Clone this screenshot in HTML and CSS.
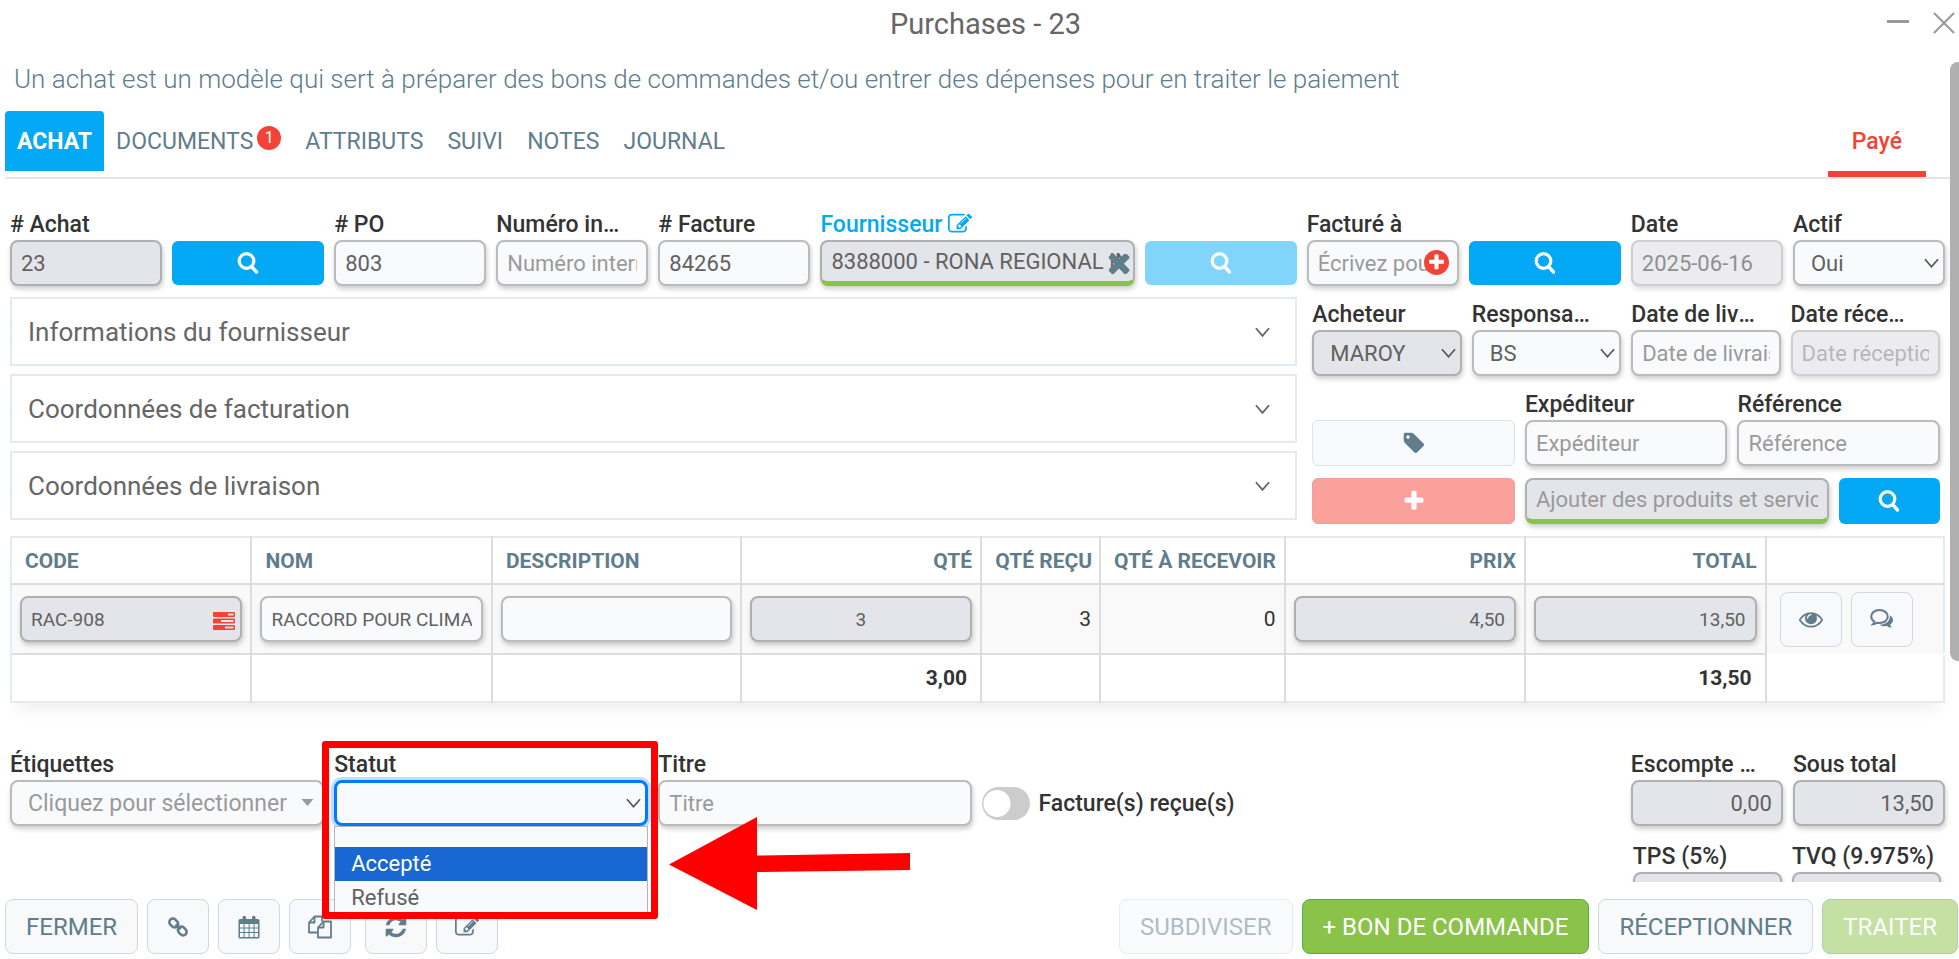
FILE: index.html
```html
<!DOCTYPE html>
<html lang="fr">
<head>
<meta charset="UTF-8" />
<meta name="viewport" content="width=device-width, initial-scale=1" />
<title>Purchases - 23</title>
<link rel="stylesheet" href="styles.css">
</head>
<body>

<svg class="sprite" aria-hidden="true">
  <symbol id="i-search" viewBox="0 0 24 24"><ellipse cx="10.5" cy="10" rx="7.3" ry="7.3" fill="none" stroke="currentColor" stroke-width="3.2"/><path d="M15.5 15.5l5 5.500" fill="none" stroke="currentColor" stroke-width="3.400" stroke-linecap="round"/></symbol>
  <symbol id="i-edit" viewBox="0 0 1792 1792"><path d="M888 1184l116-116-152-152-116 116v56h96v96h56zm440-720q-16-16-33 1l-350 350q-17 17-1 33t33-1l350-350q17-17 1-33zm80 594v190q0 119-84.5 203.5t-203.5 84.5h-832q-119 0-203.5-84.5t-84.5-203.5v-832q0-119 84.5-203.500t203.500-84.500h832q63 0 117 25 15 7 18 23 3 17-9 29l-49 49q-14 14-32 8-23-6-45-6h-832q-66 0-113 47t-47 113v832q0 66 47 113t113 47h832q66 0 113-47t47-113v-126q0-13 9-22l64-64q15-15 35-7t20 29zm-96-738l288 288-672 672h-288v-288zm444 132l-92 92-288-288 92-92q28-28 68-28t68 28l152 152q28 28 28 68t-28 68z"/></symbol>
  <symbol id="i-times" viewBox="260 400 1260 1260"><path d="M1490 1322q0 40-28 68l-136 136q-28 28-68 28t-68-28l-294-294-294 294q-28 28-68 28t-68-28l-136-136q-28-28-28-68t28-68l294-294-294-294q-28-28-28-68t28-68l136-136q28-28 68-28t68 28l294 294 294-294q28-28 68-28t68 28l136 136q28 28 28 68t-28 68l-294 294 294 294q28 28 28 68z"/></symbol>
  <symbol id="i-plus" viewBox="0 0 1792 1792"><path d="M1600 736v192q0 40-28 68t-68 28h-416v416q0 40-28 68t-68 28h-192q-40 0-68-28t-28-68v-416h-416q-40 0-68-28t-28-68v-192q0-40 28-68t68-28h416v-416q0-40 28-68t68-28h192q40 0 68 28t28 68v416h416q40 0 68 28t28 68z"/></symbol>
  <symbol id="i-tag" viewBox="0 0 1792 1792"><path d="M576 448q0-53-37.500-90.500t-90.500-37.500-90.500 37.500-37.500 90.500 37.500 90.500 90.500 37.500 90.500-37.500 37.500-90.500zm1067 576q0 53-37 90l-491 492q-39 37-91 37-53 0-90-37l-715-716q-38-37-64.500-101t-26.500-117v-416q0-52 38-90t90-38h416q53 0 117 26.500t102 64.500l715 714q37 39 37 91z"/></symbol>
  <symbol id="i-eye" viewBox="0 0 1792 1792"><path d="M1664 960q-152-236-381-353 61 104 61 225 0 185-131.500 316.500t-316.500 131.500-316.500-131.500-131.500-316.500q0-121 61-225-229 117-381 353 133 205 333.500 326.500t434.500 121.500 434.500-121.500 333.500-326.500zm-720-384q0-20-14-34t-34-14q-125 0-214.500 89.500t-89.500 214.500q0 20 14 34t34 14 34-14 14-34q0-86 61-147t147-61q20 0 34-14t14-34zm848 384q0 34-20 69-140 230-376.500 368.500t-499.500 138.500-499.500-139-376.500-368q-20-35-20-69t20-69q140-229 376.500-368t499.500-139 499.500 139 376.500 368q20 35 20 69z"/></symbol>
  <symbol id="i-comments" viewBox="0 0 24 24"><path d="M9.500 3c4.700 0 8.300 2.900 8.300 6.500S14.200 16 9.500 16c-.9 0-1.700-.1-2.500-.3-1.300.9-2.700 1.500-4 1.600.8-.8 1.200-1.700 1.300-2.800C2.300 13.300 1.200 11.500 1.200 9.500 1.200 5.900 4.800 3 9.500 3z" fill="none" stroke="currentColor" stroke-width="2"/><path d="M20 8.500c1.900 1.100 3 2.800 3 4.600 0 1.800-1 3.400-2.700 4.500.1 1.300.8 2.300 1.700 3.200-2 0-3.600-.6-5-1.700-2.700.4-5.300-.1-7.300-1.400 5.700.1 10.500-3.500 10.300-9.200z"/></symbol>
  <symbol id="i-tasks" viewBox="0 0 22 18"><path fill-rule="evenodd" d="M1 0h20a1 1 0 0 1 1 1v3a1 1 0 0 1-1 1H1a1 1 0 0 1-1-1V1a1 1 0 0 1 1-1zM15 1.500v2h5.500v-2zM1 6.500h20a1 1 0 0 1 1 1v3a1 1 0 0 1-1 1H1a1 1 0 0 1-1-1v-3a1 1 0 0 1 1-1zM8 8v2h12.500V8zM1 13h20a1 1 0 0 1 1 1v3a1 1 0 0 1-1 1H1a1 1 0 0 1-1-1v-3a1 1 0 0 1 1-1zM12 14.500v2h8.500v-2z"/></symbol>
  <symbol id="i-link" viewBox="0 0 24 24"><g fill="none" stroke="currentColor" stroke-width="2.600"><rect x="3" y="4.500" width="9.500" height="7" rx="3.500" transform="rotate(45 7.700 8)"/><rect x="11.500" y="12.500" width="9.500" height="7" rx="3.500" transform="rotate(45 16.300 16)"/><path d="M9.500 9.500l5 5"/></g></symbol>
  <symbol id="i-calendar" viewBox="0 0 24 24"><path fill-rule="evenodd" d="M3 4h2.500V2.500a1.500 1.500 0 0 1 3.500 0V4h6V2.500a1.500 1.500 0 0 1 3.500 0V4H21a1.500 1.500 0 0 1 1.500 1.500V22a1.500 1.500 0 0 1-1.500 1.500H3A1.500 1.500 0 0 1 1.500 22V5.500A1.500 1.500 0 0 1 3 4zM3 9v3.500h3.600V9zM7.600 9v3.500h4V9zM12.600 9v3.500h4V9zM17.600 9v3.500H21V9zM3 13.500V17h3.600v-3.500zM7.600 13.500V17h4v-3.500zM12.600 13.500V17h4v-3.500zM17.600 13.500V17H21v-3.500zM3 18v4h3.600v-4zM7.600 18v4h4v-4zM12.600 18v4h4v-4zM17.600 18v4H21v-4z"/></symbol>
  <symbol id="i-copy" viewBox="0 0 24 24"><g fill="none" stroke="currentColor" stroke-width="1.800" stroke-linejoin="round"><path d="M9.500 17.500H1V7.500L6.500 1.500H14v5"/><path d="M6.500 1.500v6H1"/><path d="M10 12.500l5.500-6H23v16H10z"/><path d="M15.500 6.500v6H10"/></g></symbol>
  <symbol id="i-refresh" viewBox="0 0 1792 1792"><path d="M1639 1056q0 5-1 7-64 268-268 434.500t-478 166.500q-146 0-282.500-55t-243.500-157l-129 129q-19 19-45 19t-45-19-19-45v-448q0-26 19-45t45-19h448q26 0 45 19t19 45-19 45l-137 137q71 66 161 102t187 36q134 0 250-65t186-179q11-17 53-117 8-23 30-23h192q13 0 22.500 9.500t9.500 22.500zm25-800v448q0 26-19 45t-45 19h-448q-26 0-45-19t-19-45 19-45l138-138q-148-137-349-137-134 0-250 65t-186 179q-11 17-53 117-8 23-30 23h-199q-13 0-22.500-9.500t-9.500-22.500v-7q65-268 270-434.500t480-166.500q146 0 284 55.500t245 156.500l130-129q19-19 45-19t45 19 19 45z"/></symbol>
  <symbol id="i-chevron" viewBox="0 0 16 12"><path d="M1 2l7 8 7-8" fill="none" stroke="currentColor" stroke-width="2"/></symbol>
</svg>

<header class="titlebar">
  <h1>Purchases - 23</h1>
  <div class="window-buttons">
    <button type="button" aria-label="Réduire"><svg viewBox="0 0 22 22"><path d="M0 9.500h22" stroke="currentColor" stroke-width="3"/></svg></button>
    <button type="button" aria-label="Fermer la fenêtre"><svg viewBox="0 0 22 22"><path d="M1 1l20 20M21 1L1 21" stroke="currentColor" stroke-width="2"/></svg></button>
  </div>
</header>

<main>
  <p class="intro">Un achat est un modèle qui sert à préparer des bons de commandes et/ou entrer des dépenses pour en traiter le paiement</p>

  <nav class="tabs">
    <a href="#achat" class="tab active">ACHAT</a>
    <a href="#documents" class="tab">DOCUMENTS<span class="badge">1</span></a>
    <a href="#attributs" class="tab">ATTRIBUTS</a>
    <a href="#suivi" class="tab">SUIVI</a>
    <a href="#notes" class="tab">NOTES</a>
    <a href="#journal" class="tab">JOURNAL</a>
    <span class="paid">Payé</span>
  </nav>

  <form id="achat" class="content">
    <div class="grid">
      <div class="field"><label for="achatNo"># Achat</label><input id="achatNo" class="control grey" value="23" readonly></div>
      <button type="button" class="btn-search" aria-label="Chercher un achat"><svg class="icon"><use href="#i-search"/></svg></button>
      <div class="field"><label for="po"># PO</label><input id="po" class="control" value="803"></div>
      <div class="field"><label for="interne">Numéro interne</label><input id="interne" class="control" placeholder="Numéro interne"></div>
      <div class="field"><label for="facture"># Facture</label><input id="facture" class="control" value="84265"></div>
      <div class="field span2">
        <label for="fournisseur"><a href="#fournisseur">Fournisseur <svg class="icon small"><use href="#i-edit"/></svg></a></label>
        <div class="with-icon">
          <input id="fournisseur" class="control grey green" value="8388000 - RONA REGIONAL INC" readonly>
          <button type="button" class="clear" aria-label="Effacer"><svg><use href="#i-times"/></svg></button>
        </div>
      </div>
      <button type="button" class="btn-search faded" aria-label="Chercher un fournisseur" disabled><svg class="icon"><use href="#i-search"/></svg></button>
      <div class="field">
        <label for="factureA">Facturé à</label>
        <div class="with-icon">
          <input id="factureA" class="control" placeholder="Écrivez pour">
          <button type="button" class="add" aria-label="Ajouter"><svg><use href="#i-plus"/></svg></button>
        </div>
      </div>
      <button type="button" class="btn-search" aria-label="Chercher un client"><svg class="icon"><use href="#i-search"/></svg></button>
      <div class="field"><label for="date">Date</label><input id="date" class="control" value="2025-06-16" disabled></div>
      <div class="field"><label for="actif">Actif</label><select id="actif" class="control"><option>Oui</option><option>Non</option></select></div>
    </div>

    <div class="middle">
      <div class="panels">
        <button type="button" class="panel">Informations du fournisseur<svg><use href="#i-chevron"/></svg></button>
        <button type="button" class="panel">Coordonnées de facturation<svg><use href="#i-chevron"/></svg></button>
        <button type="button" class="panel">Coordonnées de livraison<svg><use href="#i-chevron"/></svg></button>
      </div>
      <div class="side">
        <div class="row four">
          <div class="field"><label for="acheteur">Acheteur</label><select id="acheteur" class="control grey"><option>MAROY</option></select></div>
          <div class="field"><label for="responsable">Responsable</label><select id="responsable" class="control"><option>BS</option></select></div>
          <div class="field"><label for="livraison">Date de livraison</label><input id="livraison" class="control" placeholder="Date de livraison"></div>
          <div class="field"><label for="reception">Date réception</label><input id="reception" class="control" placeholder="Date réception" disabled></div>
        </div>
        <div class="row three">
          <button type="button" class="btn-side" aria-label="Étiquette"><svg class="icon"><use href="#i-tag"/></svg></button>
          <div class="field"><label for="expediteur">Expéditeur</label><input id="expediteur" class="control" placeholder="Expéditeur"></div>
          <div class="field"><label for="reference">Référence</label><input id="reference" class="control" placeholder="Référence"></div>
        </div>
        <div class="row products">
          <button type="button" class="btn-side red" aria-label="Ajouter un produit" disabled><svg class="icon"><use href="#i-plus"/></svg></button>
          <input class="control grey green" placeholder="Ajouter des produits et services" aria-label="Ajouter des produits et services" readonly>
          <button type="button" class="btn-search tall" aria-label="Chercher un produit"><svg class="icon"><use href="#i-search"/></svg></button>
        </div>
      </div>
    </div>

    <table class="items">
      <colgroup>
        <col class="c-main"><col class="c-main"><col class="c-desc"><col class="c-main"><col class="c-recu"><col class="c-recevoir"><col class="c-main"><col class="c-main"><col class="c-actions">
      </colgroup>
      <thead>
        <tr>
          <th>CODE</th>
          <th>NOM</th>
          <th>DESCRIPTION</th>
          <th class="num">QTÉ</th>
          <th class="num">QTÉ REÇU</th>
          <th class="num">QTÉ À RECEVOIR</th>
          <th class="num">PRIX</th>
          <th class="num">TOTAL</th>
          <th></th>
        </tr>
      </thead>
      <tbody>
        <tr>
          <td><div class="with-icon"><input class="control grey" value="RAC-908" aria-label="Code" readonly><svg class="tasks"><use href="#i-tasks"/></svg></div></td>
          <td><input class="control" value="RACCORD POUR CLIMATISEUR" aria-label="Nom"></td>
          <td><input class="control" aria-label="Description"></td>
          <td><input class="control grey center" value="3" aria-label="Qté" readonly></td>
          <td class="num">3</td>
          <td class="num">0</td>
          <td><input class="control grey right" value="4,50" aria-label="Prix" readonly></td>
          <td><input class="control grey right" value="13,50" aria-label="Total" readonly></td>
          <td>
            <div class="actions">
              <button type="button" class="btn icon-only" aria-label="Voir"><svg class="icon"><use href="#i-eye"/></svg></button>
              <button type="button" class="btn icon-only" aria-label="Commentaires"><svg class="icon"><use href="#i-comments"/></svg></button>
            </div>
          </td>
        </tr>
      </tbody>
      <tfoot>
        <tr>
          <td></td><td></td><td></td>
          <td class="num">3,00</td>
          <td></td><td></td><td></td>
          <td class="num">13,50</td>
          <td></td>
        </tr>
      </tfoot>
    </table>

    <div class="grid bottom">
      <div class="field span2"><label for="etiquettes">Étiquettes</label><select id="etiquettes" class="control tags"><option>Cliquez pour sélectionner</option></select></div>
      <div class="field span2 statut">
        <label for="statut">Statut</label>
        <select id="statut" class="control focused"><option></option><option>Accepté</option><option>Refusé</option></select>
        <ul class="options">
          <li class="blank"></li>
          <li class="selected">Accepté</li>
          <li>Refusé</li>
        </ul>
        <div class="highlight"></div>
        <svg class="arrow" viewBox="0 0 242 94"><path d="M0 47.500L88 0v38.500L241 36v17L88 55v38z"/></svg>
      </div>
      <div class="field span2"><label for="titre">Titre</label><input id="titre" class="control" placeholder="Titre"></div>
      <label class="toggle"><input type="checkbox"><span>Facture(s) reçue(s)</span></label>
      <div class="totals">
        <div class="row two">
          <div class="field"><label for="escompte">Escompte global</label><input id="escompte" class="control grey right" value="0,00" readonly></div>
          <div class="field"><label for="soustotal">Sous total</label><input id="soustotal" class="control grey right" value="13,50" readonly></div>
        </div>
        <div class="row two taxes">
          <div class="field"><label for="tps">TPS (5%)</label><input id="tps" class="control grey right" readonly></div>
          <div class="field"><label for="tvq">TVQ (9.975%)</label><input id="tvq" class="control grey right" readonly></div>
        </div>
      </div>
    </div>
  </form>
  <div class="scrollbar"></div>
</main>

<footer class="toolbar">
  <div class="group">
    <button type="button" class="btn">FERMER</button>
    <button type="button" class="btn icon-only" aria-label="Lien"><svg class="icon"><use href="#i-link"/></svg></button>
    <button type="button" class="btn icon-only" aria-label="Calendrier"><svg class="icon"><use href="#i-calendar"/></svg></button>
    <button type="button" class="btn icon-only" aria-label="Copier"><svg class="icon"><use href="#i-copy"/></svg></button>
  </div>
  <div class="group">
    <button type="button" class="btn icon-only" aria-label="Rafraîchir"><svg class="icon"><use href="#i-refresh"/></svg></button>
    <button type="button" class="btn icon-only" aria-label="Modifier"><svg class="icon"><use href="#i-edit"/></svg></button>
  </div>
  <div class="group end">
    <button type="button" class="btn faded" disabled>SUBDIVISER</button>
    <button type="button" class="btn green">+ BON DE COMMANDE</button>
    <button type="button" class="btn">RÉCEPTIONNER</button>
    <button type="button" class="btn green faded" disabled>TRAITER</button>
  </div>
</footer>

</body>
</html>
```
FILE: styles.css
```css
* {
  box-sizing: border-box;
}
body {
  margin: 0;
  height: 100vh;
  overflow: hidden;
  display: flex;
  flex-direction: column;
  font-family: Roboto, sans-serif;
  font-size: 22px;
  color: #333;
  background-color: #fff;
}
button, input, select {
  font: inherit;
  margin: 0;
}
button {
  cursor: pointer;
}
a {
  text-decoration: none;
  color: inherit;
}
svg {
  fill: currentColor;
}
.sprite {
  display: none;
}
.icon {
  width: 24px;
  height: 24px;
  display: block;
}
.icon.small {
  display: inline-block;
  vertical-align: -4px;
}

/* title bar */
.titlebar {
  position: relative;
  height: 62px;
  flex: none;
  padding: 8px 8px 0 20px;
}
.titlebar h1 {
  margin: 0;
  text-align: center;
  font-size: 29px;
  line-height: 32px;
  font-weight: 400;
  color: #666;
}
.window-buttons {
  position: absolute;
  top: 12px;
  right: 4px;
  display: flex;
  gap: 24px;
}
.window-buttons button {
  padding: 0;
  border: 0;
  background: none;
  color: #999;
}
.window-buttons svg {
  display: block;
  width: 22px;
  height: 22px;
}

main {
  position: relative;
  flex: 1;
  min-height: 0;
  padding-left: 5px;
}
.scrollbar {
  position: absolute;
  top: 0;
  right: 0;
  width: 9px;
  height: 599px;
  border-radius: 8px 0 0 8px;
  background-color: #b0b0b0;
}
.intro {
  margin: 0;
  padding: 0 9px;
  height: 49px;
  font-size: 26px;
  line-height: 34px;
  font-weight: 300;
  color: #607d8b;
}

/* tabs */
.tabs {
  display: flex;
  height: 68px;
  margin-right: 9px;
  padding-right: 24px;
  border-bottom: 2px solid #e5e5e5;
  font-size: 23px;
}
.tab {
  height: 60px;
  padding: 0 12px;
  line-height: 61px;
  color: #607d8b;
}
.tab.active {
  border-radius: 4px 4px 0 0;
  background-color: #03a9f4;
  color: #fff;
  font-weight: 700;
}
.badge {
  display: inline-block;
  width: 24px;
  height: 24px;
  margin-left: 4px;
  border-radius: 50%;
  background-color: #f44336;
  color: #fff;
  font-size: 16px;
  line-height: 24px;
  text-align: center;
  vertical-align: 6px;
}
.paid {
  margin-left: auto;
  padding: 0 24px;
  line-height: 61px;
  border-bottom: 6px solid #f44336;
  color: #f44336;
  font-weight: 500;
}

/* form */
.content {
  padding: 31px 14px 0 5px;
}
.grid {
  display: grid;
  grid-template-columns: repeat(12, minmax(0, 1fr));
  gap: 10px;
  align-items: end;
}
.span2 {
  grid-column: span 2;
}
.field {
  min-width: 0;
}
.field label {
  display: block;
  height: 30px;
  padding-right: 24px;
  font-size: 23px;
  line-height: 30px;
  font-weight: 500;
  white-space: nowrap;
  overflow: hidden;
  text-overflow: ellipsis;
}
.field label a {
  color: #03a9f4;
}
.control {
  display: block;
  width: 100%;
  height: 46px;
  padding: 0 9px;
  border: 2px solid #bbb;
  border-radius: 8px;
  background-color: #f9fafc;
  box-shadow: 1px 3px 5px rgba(0, 0, 0, 0.2);
  color: #616161;
  outline: none;
}
.control::placeholder {
  color: #9a9a9a;
  opacity: 1;
}
.control.grey {
  background-color: #e4e5ea;
  border-color: #b0b0b2;
}
.control.green {
  border-bottom: 5px solid #8bc34a;
}
.control:disabled {
  background-color: #e4e5ea;
  opacity: 0.7;
}
.control.right {
  text-align: right;
}
.control.center {
  text-align: center;
}
select.control {
  appearance: none;
  padding: 0 32px 0 16px;
  background-image: url("data:image/svg+xml,%3Csvg xmlns='http://www.w3.org/2000/svg' viewBox='0 0 16 12'%3E%3Cpath d='M1 2l7 8 7-8' fill='none' stroke='%23555' stroke-width='1.800'/%3E%3C/svg%3E");
  background-repeat: no-repeat;
  background-position: right 4px center;
  background-size: 15px 12px;
}
select.control.tags {
  color: #9a9a9a;
  font-size: 23px;
  background-image: url("data:image/svg+xml,%3Csvg xmlns='http://www.w3.org/2000/svg' viewBox='0 0 12 8'%3E%3Cpath d='M0 0h12L6 7z' fill='%23999'/%3E%3C/svg%3E");
  background-position: right 8px center;
  background-size: 13px 8px;
}
select.control.focused {
  border: 3px solid #007bff;
  box-shadow: 0 0 0 3px rgba(0, 123, 255, 0.25);
}
.with-icon {
  position: relative;
}
.with-icon button {
  position: absolute;
  display: flex;
  align-items: center;
  justify-content: center;
  padding: 0;
  border: 0;
}
.with-icon .clear {
  right: 5px;
  top: 14px;
  background: none;
  color: #607d8b;
}
.clear svg {
  width: 22px;
  height: 22px;
}
.with-icon .add {
  right: 10px;
  top: 10px;
  width: 25px;
  height: 25px;
  border-radius: 50%;
  background-color: #f44336;
  color: #fff;
}
.add svg {
  width: 19px;
  height: 19px;
}
.with-icon .tasks {
  position: absolute;
  right: 7px;
  top: 16px;
  width: 22px;
  height: 18px;
  color: #f44336;
}
.btn-search,
.btn-side {
  display: flex;
  align-items: center;
  justify-content: center;
  height: 44px;
  margin-bottom: 1px;
  padding: 0;
  border: 0;
  border-radius: 6px;
  background-color: #03a9f4;
  color: #fff;
}
.btn-search.faded {
  background-color: #81d4fa;
}
.btn-side,
.btn-search.tall {
  height: 46px;
  margin-bottom: 0;
}
.btn-side {
  border: 1px solid #dbe3e7;
  background-color: #f7f9fb;
  color: #607d8b;
}
.btn-side.red {
  border-color: #f2a09b;
  background-color: #faa19b;
  color: #fff;
}

.middle {
  display: grid;
  grid-template-columns: minmax(0, 2fr) minmax(0, 1fr);
  column-gap: 10px;
  padding-top: 11px;
}
.panels {
  display: flex;
  flex-direction: column;
  gap: 8px;
  margin-right: -4px;
}
.panel {
  display: flex;
  align-items: center;
  justify-content: space-between;
  height: 69px;
  padding: 0 25px 0 16px;
  border: 2px solid #e4ebf0;
  background-color: #fff;
  font-size: 26px;
  color: #666;
}
.panel svg {
  width: 15px;
  height: 12px;
}
.side {
  display: flex;
  flex-direction: column;
  gap: 14px;
  padding: 3px 5px 0 9px;
}
.row {
  display: grid;
  gap: 10px;
  align-items: end;
}
.row.two {
  grid-template-columns: repeat(2, minmax(0, 1fr));
}
.row.three {
  grid-template-columns: repeat(3, minmax(0, 1fr));
}
.row.four {
  grid-template-columns: repeat(4, minmax(0, 1fr));
}
.row.products {
  grid-template-columns: 2fr 3fr 1fr;
  margin-top: -2px;
}

/* items table */
.items {
  width: 100%;
  margin-top: 12px;
  table-layout: fixed;
  border-collapse: collapse;
  border: 2px solid #e4ebf0;
  box-shadow: 0 14px 16px -8px rgba(0, 0, 0, 0.07);
  font-size: 21px;
}
.c-main {
  width: 12.440%;
}
.c-desc {
  width: 12.870%;
}
.c-recu {
  width: 6.150%;
}
.c-recevoir {
  width: 9.550%;
}
.items th,
.items td {
  padding: 0 8px;
  border-left: 2px solid #ddd;
  text-align: left;
}
.items th:first-child,
.items td:first-child {
  border-left-color: #e4ebf0;
}
.items th {
  height: 47px;
  padding: 0 8px 0 13px;
  border-bottom: 2px solid #ddd;
  color: #607d8b;
  font-size: 21px;
  font-weight: 700;
  white-space: nowrap;
}
.items th.num,
.items td.num {
  text-align: right;
}
.items tbody td {
  height: 70px;
  background-color: #f9f9f9;
}
.items .control {
  font-size: 19px;
}
.items tfoot td {
  height: 48px;
  padding: 0 13px;
  border-top: 2px solid #ddd;
  font-weight: 700;
}
.items tfoot td:last-child {
  border-top-color: transparent;
}
.actions {
  display: flex;
  gap: 9px;
  padding-left: 5px;
}

/* bottom fields */
.bottom {
  margin-top: 47px;
  align-items: start;
}
.statut {
  position: relative;
}
.options {
  position: absolute;
  z-index: 2;
  top: 76px;
  left: 0;
  right: 0;
  height: 89px;
  margin: 0;
  padding: 0;
  overflow: hidden;
  border: 1px solid #b5b5b5;
  background-color: #f9fafc;
  list-style: none;
  line-height: 34px;
  color: #616161;
}
.options li {
  height: 34px;
  padding: 0 16px;
}
.options .blank {
  height: 20px;
}
.options .selected {
  background-color: #1967d2;
  color: #fff;
}
.highlight {
  position: absolute;
  z-index: 3;
  top: -9px;
  left: -12px;
  right: -10px;
  height: 178px;
  border: 7px solid #f00;
  border-radius: 3px;
}
.arrow {
  position: absolute;
  z-index: 3;
  top: 67px;
  left: calc(100% + 21px);
  width: 242px;
  height: 94px;
  fill: #f00;
}
.toggle {
  grid-column: span 4;
  display: flex;
  align-items: center;
  gap: 8px;
  height: 46px;
  margin-top: 30px;
  font-size: 23px;
  font-weight: 500;
}
.toggle input {
  appearance: none;
  width: 48px;
  height: 33px;
  border-radius: 17px;
  background: radial-gradient(circle at 15px 50%, #fff 13px, #ccc 14px);
}
.totals {
  grid-column: span 2;
}
.taxes {
  margin-top: 16px;
  padding: 0 4px 0 2px;
}
.taxes label {
  padding-right: 0;
}

/* toolbar */
.toolbar {
  position: relative;
  z-index: 1;
  flex: none;
  display: flex;
  gap: 14px;
  padding: 17px 1px 5px 5px;
  background-color: #fff;
}
.group {
  display: flex;
  gap: 9px;
}
.group.end {
  margin-left: auto;
}
.btn {
  height: 55px;
  padding: 0 20px;
  border: 1px solid #ccd9df;
  border-radius: 8px;
  background-color: #f7f9fb;
  color: #607d8b;
  font-size: 24px;
  white-space: nowrap;
}
.btn.icon-only {
  padding: 0 18px;
}
.btn.green {
  border-color: #4caf50;
  background-color: #8bc34a;
  color: #fff;
}
.btn.faded {
  opacity: 0.5;
}
```
